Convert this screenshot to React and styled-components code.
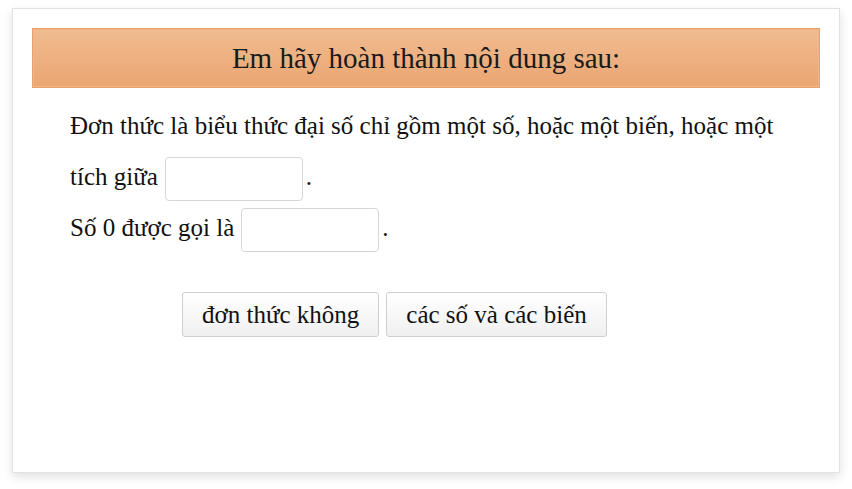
import React from 'react'
import styled, { createGlobalStyle } from 'styled-components'

const GlobalStyle = createGlobalStyle`
  html, body {
    margin: 0;
    padding: 0;
    background: #ffffff;
  }
  body {
    font-family: "Liberation Serif", "DejaVu Serif", serif;
  }
`

const Page = styled.div`
  width: 852px;
  height: 489px;
  box-sizing: border-box;
  padding: 8px 12px 16px 12px;
`

const Card = styled.div`
  width: 828px;
  height: 465px;
  box-sizing: border-box;
  background: #fff;
  border: 1px solid #e2e2e2;
  box-shadow: 0 4px 10px rgba(0, 0, 0, 0.12);
  padding: 19px 19px 0 19px;
`

const Header = styled.div`
  height: 60px;
  box-sizing: border-box;
  border: 1px solid #eb9f68;
  box-shadow: inset 0 0 0 1px #f2b48a;
  background: linear-gradient(to bottom, #f0bc91, #eba571);
  display: flex;
  align-items: center;
  justify-content: center;
  font-size: 29px;
  color: #1a1a1a;
`

const Question = styled.div`
  padding: 12px 30px 0 38px;
  font-size: 25px;
  line-height: 51px;
  color: #111;
`

const Line = styled.div``

const Blank = styled.span`
  display: inline-block;
  width: 138px;
  height: 44px;
  box-sizing: border-box;
  border: 1px solid #d6d6d6;
  border-radius: 4px;
  background: #fff;
  vertical-align: middle;
  margin: 0 3px 0 7px;
`

const Choices = styled.div`
  display: flex;
  gap: 7px;
  padding: 39px 0 0 150px;
`

const Choice = styled.button`
  height: 45px;
  box-sizing: border-box;
  padding: 0 19px;
  font-family: inherit;
  font-size: 25px;
  color: #111;
  border: 1px solid #cfcfcf;
  border-radius: 3px;
  background: linear-gradient(to bottom, #ffffff, #f0f0f0);
  cursor: pointer;
`

const blanksText = ['đơn thức không', 'các số và các biến']

function App() {
  return (
    <>
      <GlobalStyle />
      <Page>
        <Card>
          <Header>Em hãy hoàn thành nội dung sau:</Header>
          <Question>
            <Line>
              Đơn thức là biểu thức đại số chỉ gồm một số, hoặc một biến, hoặc một tích giữa<Blank />.
            </Line>
            <Line>
              Số 0 được gọi là<Blank />.
            </Line>
          </Question>
          <Choices>
            {blanksText.map((t) => (
              <Choice key={t}>{t}</Choice>
            ))}
          </Choices>
        </Card>
      </Page>
    </>
  )
}

export default App
